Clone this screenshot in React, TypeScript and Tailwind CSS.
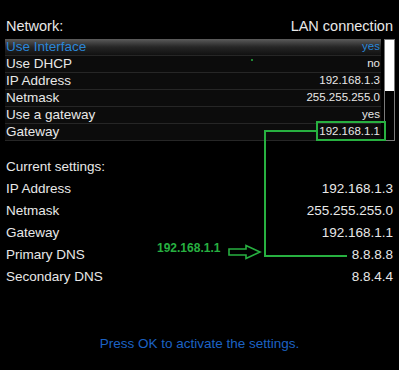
import React from 'react'

type Row = { label: string; value: string }

const menu: Row[] = [
  { label: 'Use Interface', value: 'yes' },
  { label: 'Use DHCP', value: 'no' },
  { label: 'IP Address', value: '192.168.1.3' },
  { label: 'Netmask', value: '255.255.255.0' },
  { label: 'Use a gateway', value: 'yes' },
  { label: 'Gateway', value: '192.168.1.1' },
]

const current: Row[] = [
  { label: 'IP Address', value: '192.168.1.3' },
  { label: 'Netmask', value: '255.255.255.0' },
  { label: 'Gateway', value: '192.168.1.1' },
  { label: 'Primary DNS', value: '8.8.8.8' },
  { label: 'Secondary DNS', value: '8.8.4.4' },
]

export default function App() {
  return (
    <div className="relative w-[399px] h-[370px] overflow-hidden bg-black text-[#e8e8e8] font-['Liberation_Sans',Arial,sans-serif]">
      <div className="flex justify-between items-end px-[6px] h-[38px] pb-[5px] text-[14.5px] leading-none">
        <span>Network:</span>
        <span>LAN connection</span>
      </div>

      <div className="flex ml-[5px] mt-[1px] gap-[3px]">
        <div className="w-[376px] bg-[#0c0c0c]">
          {menu.map((r, i) => (
            <div
              key={r.label}
              className={`flex justify-between items-center h-[17px] px-[1px] border-b border-[#262626] ${
                i === 0 ? 'bg-gradient-to-b from-[#5c5c5c] via-[#262626] to-[#111]' : ''
              }`}
            >
              <span className={`text-[13.5px] leading-none ${i === 0 ? 'text-[#2a86d8]' : ''}`}>{r.label}</span>
              <span className={`text-[11.5px] leading-none ${i === 0 ? 'text-[#2a86d8]' : ''}`}>{r.value}</span>
            </div>
          ))}
        </div>
        <div className="w-[11px] h-[102px] border border-[#7a7a7a] bg-black flex flex-col">
          <div className="h-[51px] bg-white" />
        </div>
      </div>

      <div className="mt-[15px] px-[6px]">
        <div className="h-[22px] flex items-center text-[13.5px]">Current settings:</div>
        {current.map(r => (
          <div key={r.label} className="h-[22px] flex justify-between items-center text-[13.5px]">
            <span>{r.label}</span>
            <span>{r.value}</span>
          </div>
        ))}
      </div>

      <div className="mt-[46px] text-center text-[13.5px] text-[#1c62c4]">Press OK to activate the settings.</div>

      <svg className="absolute inset-0 pointer-events-none" width="399" height="370" viewBox="0 0 399 370">
        <rect x="317" y="122" width="68" height="18" fill="none" stroke="#27b040" strokeWidth="2" />
        <polyline points="317,131 265,131 265,256 347,256" fill="none" stroke="#27b040" strokeWidth="2" />
        <polygon points="229,249 246,249 246,245.5 260,252 246,258.5 246,255 229,255" fill="none" stroke="#27b040" strokeWidth="1.6" />
        <circle cx="252" cy="60" r="1" fill="#27b040" />
      </svg>
      <span className="absolute left-[157px] top-[242px] text-[12px] leading-none font-bold text-[#27b040]">192.168.1.1</span>
    </div>
  )
}
